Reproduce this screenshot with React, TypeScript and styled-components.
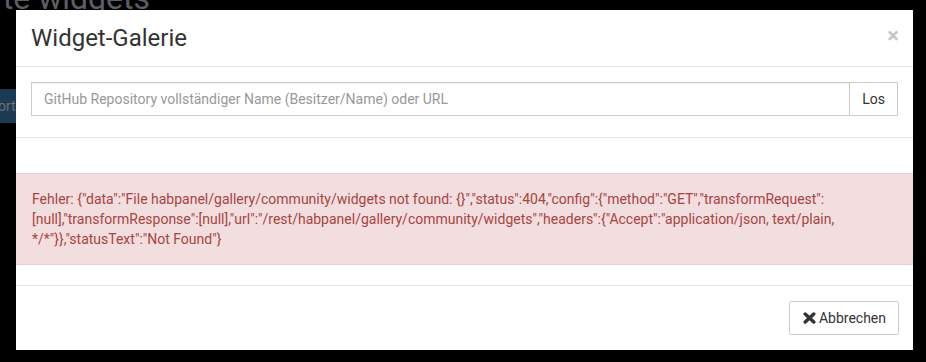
import React from 'react';
import styled, { createGlobalStyle } from 'styled-components';

const GlobalStyle = createGlobalStyle`
  html, body {
    margin: 0;
    padding: 0;
    background: #000;
    overflow: hidden;
  }
  body {
    width: 926px;
    height: 362px;
    font-family: Roboto, "Liberation Sans", Arial, sans-serif;
    font-size: 14px;
    color: #333;
  }
  * {
    box-sizing: border-box;
  }
`;

const Page = styled.div`
  width: 926px;
  height: 362px;
  background: #000;
  overflow: hidden;
`;

const PageTitle = styled.h1`
  display: flex;
  justify-content: flex-end;
  width: 150px;
  margin: -19px 0 0;
  font-size: 32px;
  line-height: 35px;
  font-weight: 400;
  white-space: nowrap;
  color: #b6bec8;
`;

const Toolbar = styled.div`
  display: flex;
  margin: 73px 0 0 -38px;
`;

const PageButton = styled.button`
  height: 34px;
  padding: 6px 12px;
  border: none;
  background: #3a74a8;
  color: #d6dee6;
  font: inherit;
  font-size: 14px;
`;

const Backdrop = styled.div`
  position: fixed;
  inset: 0;
  background: rgba(0, 0, 0, 0.5);
`;

const Dialog = styled.div`
  position: fixed;
  top: 10px;
  left: 16px;
  width: 897px;
  background: #fff;
  display: flex;
  flex-direction: column;
`;

const Header = styled.div`
  display: flex;
  align-items: flex-start;
  justify-content: space-between;
  padding: 15px;
  border-bottom: 1px solid #e5e5e5;
`;

const Title = styled.h4`
  margin: 0;
  font-size: 24px;
  line-height: 26px;
  font-weight: 400;
  color: #333;
`;

const Close = styled.button`
  border: none;
  background: none;
  padding: 0;
  margin-right: -1px;
  font: inherit;
  font-size: 22px;
  line-height: 1;
  font-weight: 700;
  color: #000;
  opacity: 0.22;
`;

const SearchSection = styled.div`
  padding: 15px 15px 21px;
  border-bottom: 1px solid #e5e5e5;
`;

const InputGroup = styled.div`
  display: flex;
`;

const Input = styled.input`
  flex: 1;
  height: 34px;
  padding: 6px 12px;
  border: 1px solid #ccc;
  border-radius: 0;
  font: inherit;
  font-size: 14px;
  color: #555;
  box-shadow: inset 0 1px 1px rgba(0, 0, 0, 0.075);

  &::placeholder {
    color: #999;
  }
`;

const AddonButton = styled.button`
  height: 34px;
  padding: 6px 12px;
  margin-left: -1px;
  border: 1px solid #ccc;
  border-radius: 0;
  background: #fff;
  font: inherit;
  font-size: 14px;
  color: #333;
`;

const Results = styled.div`
  padding: 35px 0 20px;
`;

const Alert = styled.div`
  padding: 15px 16px;
  border: 1px solid #ebccd1;
  border-left: none;
  border-right: none;
  background: #f2dede;
  color: #a94442;
  font-size: 14px;
  line-height: 20px;
`;

const Footer = styled.div`
  display: flex;
  justify-content: flex-end;
  padding: 15px 14px 15px 15px;
  border-top: 1px solid #e5e5e5;
`;

const Button = styled.button`
  display: flex;
  align-items: center;
  gap: 3px;
  height: 34px;
  padding: 6px 12px 6px 13px;
  border: 1px solid #ccc;
  border-radius: 2px;
  background: #fff;
  font: inherit;
  font-size: 14px;
  color: #333;
`;

const RemoveIcon = () => (
  <svg width="13" height="12" viewBox="0 0 13 12" aria-hidden="true">
    <path
      d="M2.2 2 L10.8 10 M10.8 2 L2.2 10"
      stroke="#333"
      strokeWidth="3.4"
      strokeLinecap="round"
      fill="none"
    />
  </svg>
);

const errorText =
  'Fehler: {"data":"File habpanel/gallery/community/widgets not found: {}","status":404,"config":{"method":"GET","transformRequest":[null],"transformResponse":[null],"url":"/rest/habpanel/gallery/community/widgets","headers":{"Accept":"application/json, text/plain, */*"}},"statusText":"Not Found"}';

export default function App() {
  return (
    <>
      <GlobalStyle />
      <Page>
        <PageTitle>Benutzerdefinierte widgets</PageTitle>
        <Toolbar>
          <PageButton>Import</PageButton>
        </Toolbar>
      </Page>
      <Backdrop />
      <Dialog>
        <Header>
          <Title>Widget-Galerie</Title>
          <Close>×</Close>
        </Header>
        <SearchSection>
          <InputGroup>
            <Input placeholder="GitHub Repository vollständiger Name (Besitzer/Name) oder URL" />
            <AddonButton>Los</AddonButton>
          </InputGroup>
        </SearchSection>
        <Results>
          <Alert>{errorText}</Alert>
        </Results>
        <Footer>
          <Button>
            <RemoveIcon />
            Abbrechen
          </Button>
        </Footer>
      </Dialog>
    </>
  );
}
